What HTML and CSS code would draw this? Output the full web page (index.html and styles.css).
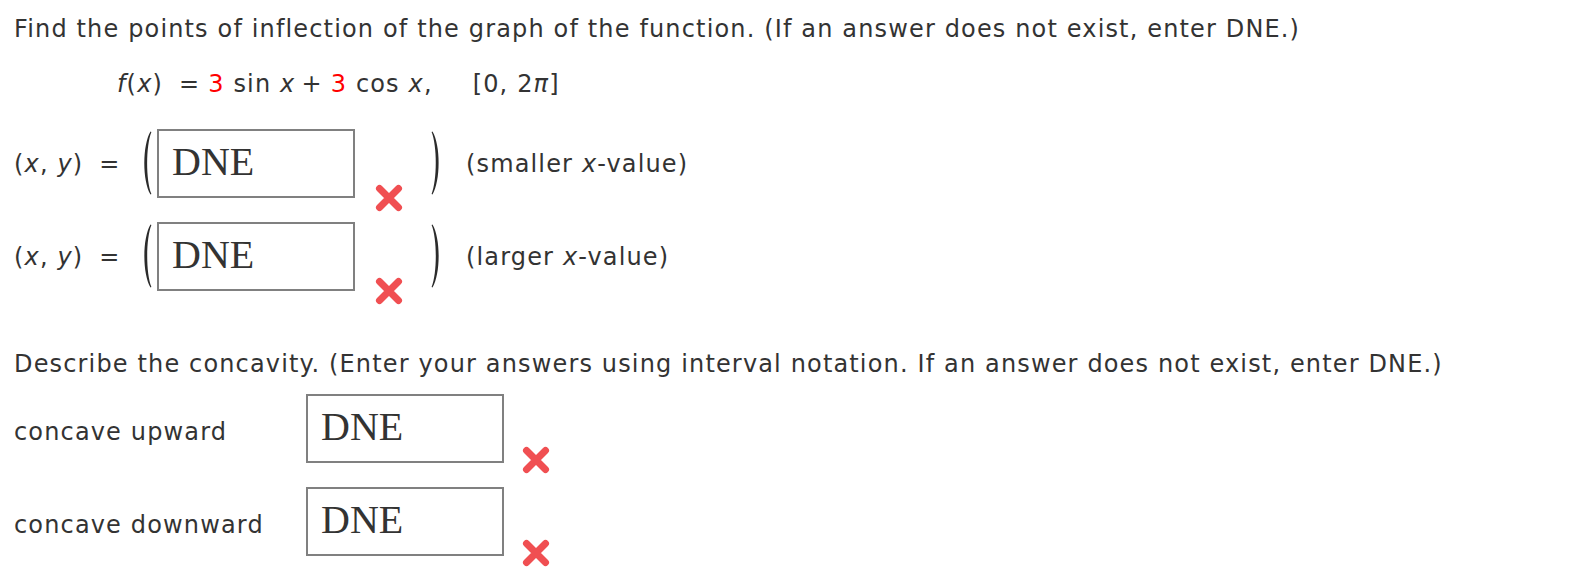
FILE: index.html
```html
<!DOCTYPE html>
<html lang="en">
<head>
<meta charset="utf-8">
<title>Points of inflection</title>
<link rel="stylesheet" href="styles.css">
</head>
<body>
<div class="page">
  <p class="prompt">Find the points of inflection of the graph of the function. (If an answer does not exist, enter DNE.)</p>
  <div class="formula"><i>f</i>(<i>x</i>)<span class="op op-eq">=</span><span class="red">3</span> sin <i>x</i><span class="op op-plus">+</span><span class="red">3</span> cos <i>x</i>,<span class="interval">[0, 2<i>π</i>]</span></div>

  <div class="point-row">
    <span class="xy">(<i>x</i>, <i>y</i>)<span class="eq">=</span></span>
    <svg class="paren" width="12" height="64" viewBox="0 0 12 64"><path d="M10.5 0.5 C2.3 14 2.3 50 10.5 63.5 L11.4 63 C5.8 49 5.8 15 11.4 1 Z"/></svg>
    <div class="box">DNE</div>
    <svg class="mark" width="28" height="28" viewBox="0 0 28 28"><path d="M4.5 4.5 L23.5 23.5 M23.5 4.5 L4.5 23.5"/></svg>
    <svg class="paren paren-r" width="12" height="64" viewBox="0 0 12 64"><path d="M1.5 0.5 C9.7 14 9.7 50 1.5 63.5 L0.6 63 C6.2 49 6.2 15 0.6 1 Z"/></svg>
    <span class="hint">(smaller <i>x</i>-value)</span>
  </div>

  <div class="point-row">
    <span class="xy">(<i>x</i>, <i>y</i>)<span class="eq">=</span></span>
    <svg class="paren" width="12" height="64" viewBox="0 0 12 64"><path d="M10.5 0.5 C2.3 14 2.3 50 10.5 63.5 L11.4 63 C5.8 49 5.8 15 11.4 1 Z"/></svg>
    <div class="box">DNE</div>
    <svg class="mark" width="28" height="28" viewBox="0 0 28 28"><path d="M4.5 4.5 L23.5 23.5 M23.5 4.5 L4.5 23.5"/></svg>
    <svg class="paren paren-r" width="12" height="64" viewBox="0 0 12 64"><path d="M1.5 0.5 C9.7 14 9.7 50 1.5 63.5 L0.6 63 C6.2 49 6.2 15 0.6 1 Z"/></svg>
    <span class="hint">(larger <i>x</i>-value)</span>
  </div>

  <p class="prompt prompt-conc">Describe the concavity. (Enter your answers using interval notation. If an answer does not exist, enter DNE.)</p>

  <div class="conc-grid">
    <span class="conc-label">concave upward</span>
    <div class="box">DNE</div>
    <svg class="mark" width="28" height="28" viewBox="0 0 28 28"><path d="M4.5 4.5 L23.5 23.5 M23.5 4.5 L4.5 23.5"/></svg>

    <span class="conc-label">concave downward</span>
    <div class="box">DNE</div>
    <svg class="mark" width="28" height="28" viewBox="0 0 28 28"><path d="M4.5 4.5 L23.5 23.5 M23.5 4.5 L4.5 23.5"/></svg>
  </div>
</div>
</body>
</html>
```
FILE: styles.css
```css
html, body {
  margin: 0;
  padding: 0;
  background: #ffffff;
}

body {
  font-family: "DejaVu Sans", Verdana, sans-serif;
  font-size: 24px;
  line-height: 28px;
  letter-spacing: 1.15px;
  color: #333333;
}

.page {
  padding: 15px 14px 0 14px;
}

.prompt {
  margin: 0;
  white-space: nowrap;
}

.formula {
  margin: 27px 0 0 103px;
  white-space: nowrap;
}

.formula .op-eq {
  margin: 0 8px 0 16px;
}

.formula .op-plus {
  margin: 0 8px 0 6px;
}

.red {
  color: #ff0000;
}

.interval {
  margin-left: 40px;
}

.point-row {
  display: flex;
  align-items: flex-start;
  height: 69px;
  margin-top: 31px;
}

.point-row + .point-row {
  margin-top: 24px;
}

.xy {
  width: 126px;
  flex-shrink: 0;
  margin-top: 21px;
  white-space: nowrap;
}

.xy .eq {
  margin-left: 16px;
}

.paren {
  flex-shrink: 0;
  margin-top: 2px;
  fill: #2b2b2b;
}

.paren-r {
  margin-left: 28px;
}

.box {
  box-sizing: border-box;
  width: 198px;
  height: 69px;
  flex-shrink: 0;
  border: 2px solid #808080;
  padding: 9px 0 0 13px;
  font-family: "Liberation Serif", "Times New Roman", serif;
  font-size: 40px;
  line-height: 44px;
  letter-spacing: 0;
  color: #333333;
  background: #ffffff;
}

.point-row .box {
  margin-left: 5px;
}

.mark {
  flex-shrink: 0;
  fill: none;
  stroke: #f04f52;
  stroke-width: 7;
  stroke-linecap: round;
}

.point-row .mark {
  margin: 55px 0 0 20px;
}

.hint {
  margin: 21px 0 0 23px;
  white-space: nowrap;
}

.prompt-conc {
  margin-top: 59px;
}

.conc-grid {
  display: grid;
  grid-template-columns: 292px 198px 46px;
  row-gap: 13px;
  margin-top: 16px;
  padding-bottom: 10px;
  align-items: start;
}

.conc-label {
  margin-top: 24px;
  white-space: nowrap;
}

.conc-grid .mark {
  margin: 52px 0 0 18px;
}
```
